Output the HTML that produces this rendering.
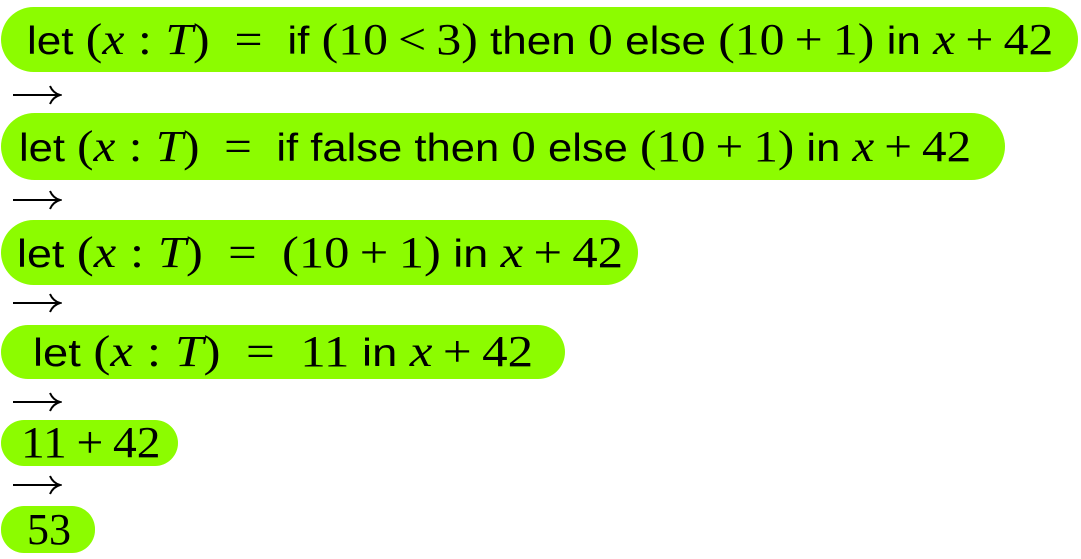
<!DOCTYPE html>
<html><head><meta charset="utf-8"><style>
body{margin:0;width:1081px;height:559px;background:#fff;position:relative;overflow:hidden;font-family:"Liberation Sans",sans-serif;color:#000}
.p{position:absolute;left:1px;background:#8cfc00;border-radius:34px;white-space:nowrap;font-size:39px;box-sizing:border-box}
.t{display:inline-block;transform-origin:0 50%}
.m{font-family:"Liberation Serif",serif;font-size:44px}
i{font-family:"Liberation Serif",serif;font-size:44px}
.o{margin:0 9px}
.e{margin:0 22px}
.c{margin:0 12px}
.a{position:absolute;left:12px;width:50px;height:22px}
</style></head><body>
<div class="p" style="top:7px;width:1077px;height:65px;line-height:65px;padding-left:26px"><span class="t" style="transform:scaleX(1.13)">let <span class="m">(<i>x</i><span class="c">:</span><i>T</i>)</span><span class="m e">=</span>if <span class="m">(10<span class="o">&lt;</span>3)</span> then <span class="m">0</span> else <span class="m">(10<span class="o">+</span>1)</span> in <span class="m"><i>x</i><span class="o">+</span>42</span></span></div>
<svg class="a" style="top:84px" viewBox="0 0 50 22"><path d="M1 11H47M38 2Q41 9 48 11Q41 13 38 20" fill="none" stroke="#000" stroke-width="2"/></svg>
<div class="p" style="top:113px;width:1004px;height:67px;line-height:67px;padding-left:18px"><span class="t" style="transform:scaleX(1.117)">let <span class="m">(<i>x</i><span class="c">:</span><i>T</i>)</span><span class="m e">=</span>if false then <span class="m">0</span> else <span class="m">(10<span class="o">+</span>1)</span> in <span class="m"><i>x</i><span class="o">+</span>42</span></span></div>
<svg class="a" style="top:189px" viewBox="0 0 50 22"><path d="M1 11H47M38 2Q41 9 48 11Q41 13 38 20" fill="none" stroke="#000" stroke-width="2"/></svg>
<div class="p" style="top:220px;width:637px;height:65px;line-height:65px;padding-left:16px"><span class="t" style="transform:scaleX(1.15)">let <span class="m">(<i>x</i><span class="c">:</span><i>T</i>)</span><span class="m e">=</span><span class="m">(10<span class="o">+</span>1)</span> in <span class="m"><i>x</i><span class="o">+</span>42</span></span></div>
<svg class="a" style="top:292px" viewBox="0 0 50 22"><path d="M1 11H47M38 2Q41 9 48 11Q41 13 38 20" fill="none" stroke="#000" stroke-width="2"/></svg>
<div class="p" style="top:325px;width:564px;height:54px;line-height:54px;padding-left:32px"><span class="t" style="transform:scaleX(1.16)">let <span class="m">(<i>x</i><span class="c">:</span><i>T</i>)</span><span class="m e">=</span><span class="m">11</span> in <span class="m"><i>x</i><span class="o">+</span>42</span></span></div>
<svg class="a" style="top:391px" viewBox="0 0 50 22"><path d="M1 11H47M38 2Q41 9 48 11Q41 13 38 20" fill="none" stroke="#000" stroke-width="2"/></svg>
<div class="p m" style="top:420px;width:177px;height:46px;line-height:46px;padding-left:20px;border-radius:23px"><span class="t" style="transform:scaleX(1.08)">11<span class="o">+</span>42</span></div>
<svg class="a" style="top:474px" viewBox="0 0 50 22"><path d="M1 11H47M38 2Q41 9 48 11Q41 13 38 20" fill="none" stroke="#000" stroke-width="2"/></svg>
<div class="p m" style="top:506px;width:94px;height:47px;line-height:47px;padding-left:26px;border-radius:23px">53</div>
</body></html>
